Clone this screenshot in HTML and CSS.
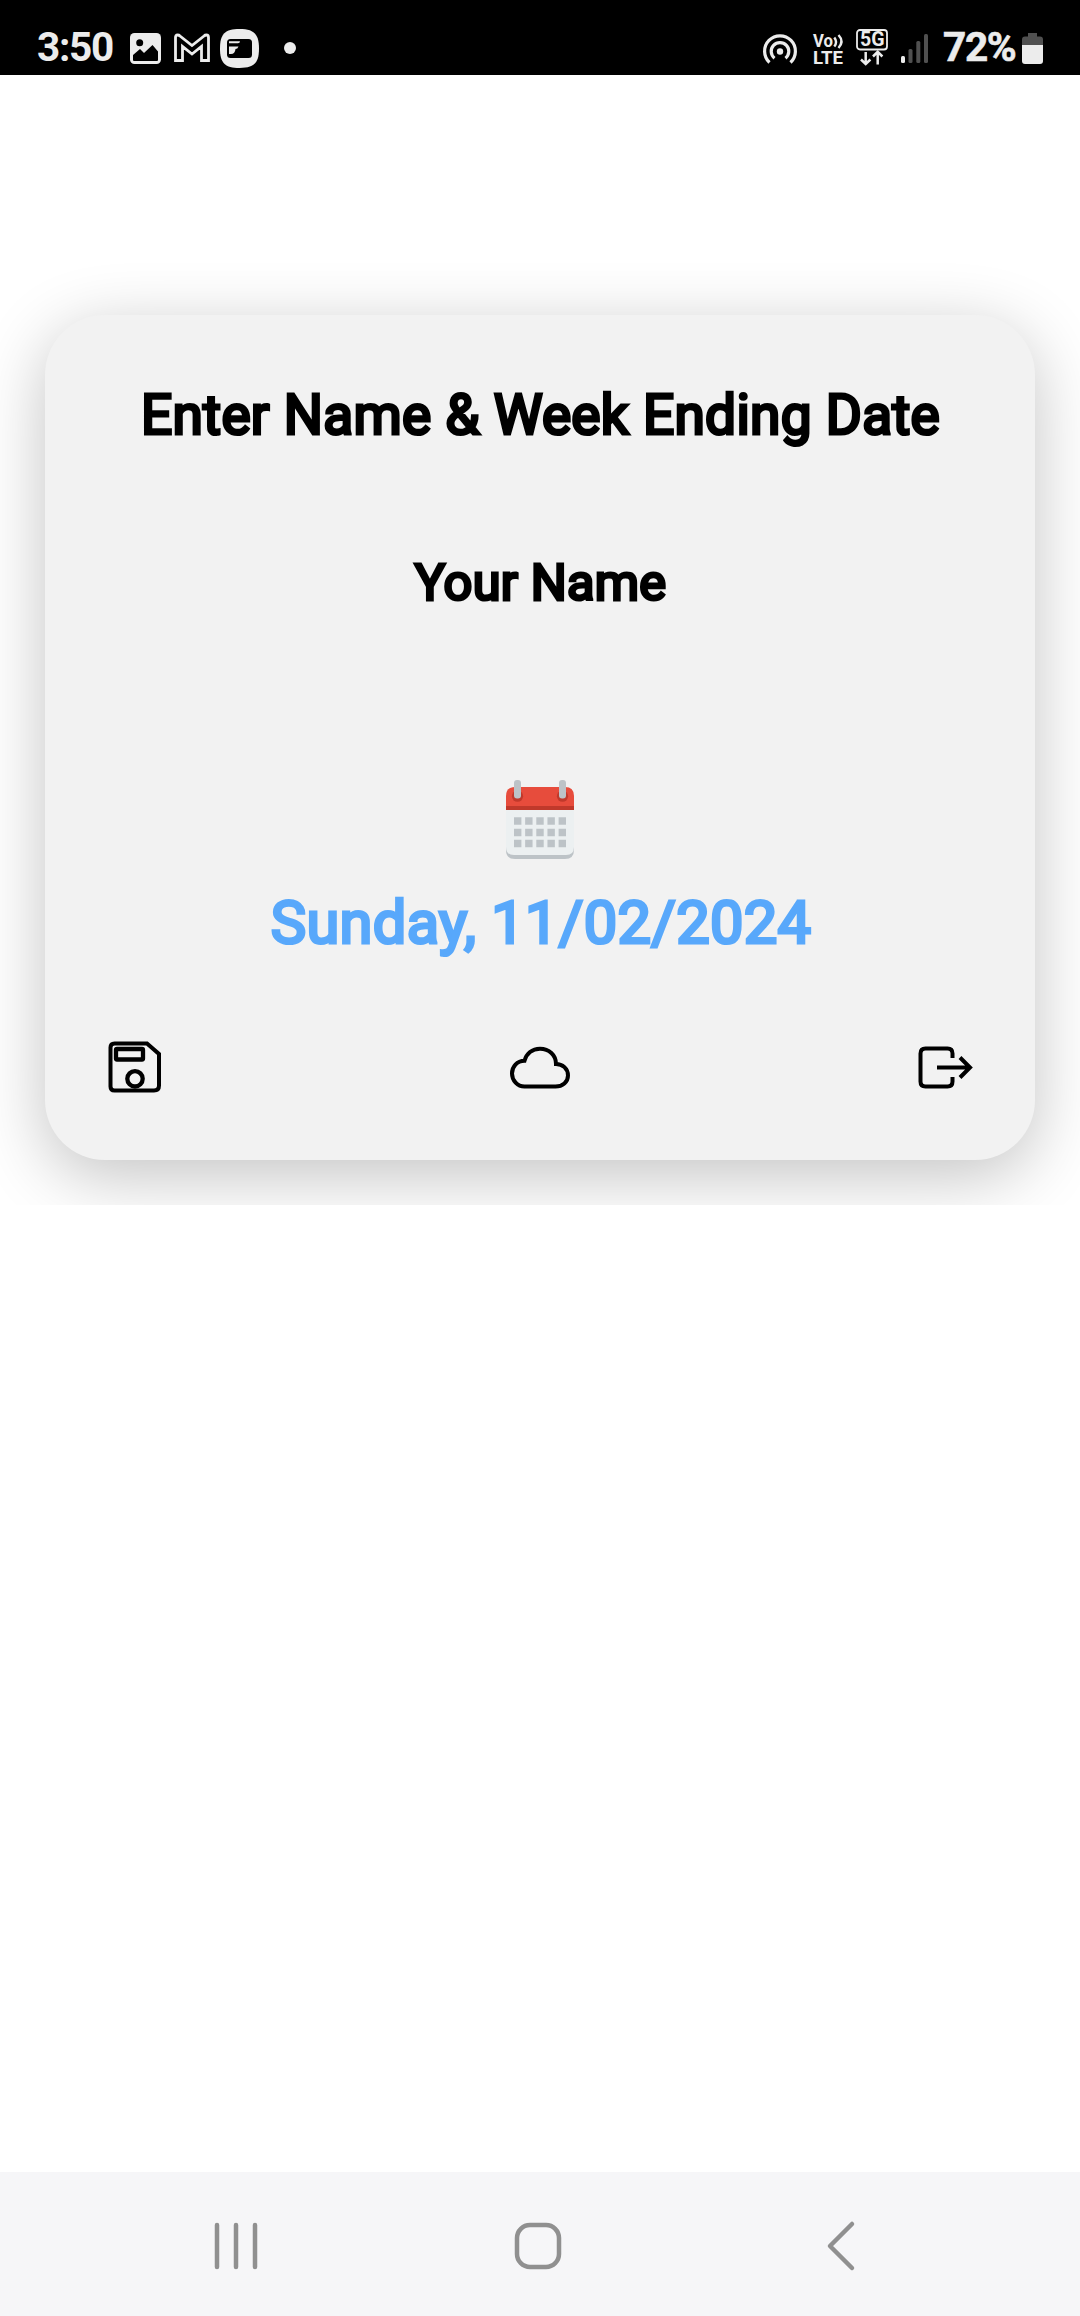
FILE: index.html
```html
<!DOCTYPE html>
<html lang="en">
<head>
<meta charset="utf-8">
<title>Week Ending Date</title>
<link rel="stylesheet" href="styles.css">
</head>
<body>
<header class="status">
  <span class="clock">3:50</span>
  <svg class="photo" width="31" height="31" viewBox="0 0 31 31"><rect width="31" height="31" rx="4.500" fill="#ececec"/><circle cx="9.700" cy="9.700" r="3.500"/><path d="M3 22l7-6 4 4 8.500-8L28 18.500V27q0 1-1 1H4q-1 0-1-1z"/></svg>
  <svg class="mail" width="36" height="28" viewBox="0 0 36 28"><path d="M1.500 26.500V3.500Q1.500 1 3.500 1 5 1 6 2l12 9.500L30 2q1-1 2.500-1 2 0 2 2.500v23h-7V12.500L18 20 8.500 12.500v14z" fill="#000" stroke="#ececec" stroke-width="2.800"/></svg>
  <svg class="app" width="39" height="39" viewBox="0 0 39 39"><path d="M19.500 0C34 0 39 5 39 19.500S34 39 19.500 39 0 34 0 19.500 5 0 19.500 0z" fill="#ececec"/><rect x="7" y="10" width="25" height="19" rx="3.500" fill="#000"/><path d="M9 12.200h11q0 2-2 2H9zM9 17.500h9.500q-1 2.500-3 2.500-.5 5-4.500 5H9z" fill="#ececec"/></svg>
  <i class="more"></i>
  <svg class="hotspot" width="34" height="30" viewBox="0 0 34 30"><g fill="none" stroke="#ececec" stroke-width="3.200"><path d="M6.500 28.500a15.400 15.400 0 1 1 21 0"/><path d="M11.500 24.200a8.800 8.800 0 1 1 11 0"/></g><circle cx="17" cy="17.500" r="3.200" fill="#ececec"/></svg>
  <svg class="volte" width="31" height="31" viewBox="0 0 31 31"><text x="0" y="13" textLength="20" lengthAdjust="spacingAndGlyphs">Vo</text><text x="0" y="30" textLength="30" lengthAdjust="spacingAndGlyphs">LTE</text><path d="M21.300 3.500q3.500 4.500 0 9M25.500 1q6 6.500 0 13" fill="none" stroke="#ececec" stroke-width="2.400"/></svg>
  <svg class="network" width="32" height="37" viewBox="0 0 32 37"><rect x="1" y="1" width="30" height="19.500" rx="3" fill="none" stroke="#ececec" stroke-width="1.800"/><text x="4" y="17.300" textLength="24.500" lengthAdjust="spacingAndGlyphs">5G</text><path d="M9.700 23v12M5 30.500l4.700 4.500 4.700-4.500M21.700 35.500V23M17 27.500l4.700-4.700 4.700 4.700" fill="none" stroke="#ececec" stroke-width="2.500"/></svg>
  <svg class="signal" width="28" height="30" viewBox="0 0 28 30"><g fill="#505050"><rect x="7.500" y="15" width="4" height="14" rx="1.500"/><rect x="15.300" y="7" width="4" height="22" rx="1.500"/><rect x="23" y="0" width="4" height="29" rx="1.500"/></g><rect x="0" y="22" width="4" height="7" rx="1.500" fill="#ececec"/></svg>
  <span class="percent">72%</span>
  <svg class="battery" width="21" height="31" viewBox="0 0 21 31"><path d="M6 0h9v3.500h3q3 0 3 3V12H0V6.500q0-3 3-3h3z" fill="#505050"/><path d="M0 12h21v16q0 3-3 3H3q-3 0-3-3z" fill="#ececec"/></svg>
</header>

<main class="content">
  <section class="card">
    <h1 class="title">Enter Name &amp; Week Ending Date</h1>
    <div class="name">Your Name</div>
    <svg class="calendar" width="68" height="80" viewBox="0 0 68 80">
      <path d="M0 65v5q0 9 9 9h50q9 0 9-9v-5z" fill="#bdc3c7"/><path d="M0 28h68v39q0 8-8 8H8q-8 0-8-8z" fill="#ecf0f1"/><path d="M0 16q0-9 9-9h50q9 0 9 9v11H0z" fill="#e74c3c"/><path d="M0 26h68v4H0z" fill="#c0392b"/>
      <circle cx="11.500" cy="16.200" r="5.600" fill="#c0392b"/><circle cx="56.500" cy="16.200" r="5.600" fill="#c0392b"/><rect x="8" y="0" width="7" height="18.500" rx="3" fill="#bdc3c7"/><rect x="53" y="0" width="7" height="18.500" rx="3" fill="#bdc3c7"/>
      <path d="M8 41h52M8 52.500h52M8 63.500h52" stroke="#bdc3c7" stroke-width="7.500" stroke-dasharray="7.400 3.750"/>
    </svg>
    <div class="date">Sunday, 11/02/2024</div>
    <div class="actions">
      <svg width="60" height="60" viewBox="0 0 60 60"><g class="line"><path d="M9.500 6.500h32.500L54 17v31.500q0 5-5 5H9.500q-4 0-4-4v-39q0-4 4-4z"/><rect class="heavy" x="11" y="12" width="27" height="10.500" rx="1"/><circle class="heavy" cx="30" cy="41.800" r="7.700"/></g></svg>
      <svg width="64" height="60" viewBox="0 0 64 60"><path class="line" d="M16.500 49.500h31c7 0 12.500-4.500 12.500-11 0-7-5.500-11.500-12-11.500C48 18 41 11.800 32 11.800c-8 0-13.500 5-15.500 12C9 24 4 29.500 4 36.500c0 7 5.500 13 12.500 13z"/></svg>
      <svg width="60" height="60" viewBox="0 0 60 60"><path class="line" d="M37.500 21v-4.500q0-5-5-5H10.500q-5 0-5 5v28q0 5 5 5h22q5 0 5-5V40M22 30.500h32M45 20.500l10 10-10 10"/></svg>
    </div>
  </section>
</main>

<footer class="nav">
  <svg width="48" height="50" viewBox="0 0 48 50"><path d="M5 4v42M24 4v42M43 4v42"/></svg>
  <svg class="home" width="52" height="52" viewBox="0 0 52 52"><rect x="5" y="5" width="42" height="42" rx="13"/></svg>
  <svg width="30" height="52" viewBox="0 0 30 52"><path d="M27 4L5 26l22 22"/></svg>
</footer>
</body>
</html>
```
FILE: styles.css
```css
body {
  margin: 0;
  height: 2316px;
  display: flex;
  flex-direction: column;
  background: #fff;
  font-family: Roboto, "Liberation Sans", sans-serif;
  overflow: hidden;
}
svg { display: block; flex: none; overflow: visible; }

.status {
  height: 75px;
  box-sizing: border-box;
  padding: 0 37px;
  display: flex;
  align-items: flex-start;
  background: #000;
  color: #ececec;
}
.status text { fill: #ececec; font-weight: 700; font-size: 18px; }
.status .network text { font-size: 20px; }
.clock, .percent {
  font-size: 40.500px;
  line-height: 48px;
  font-weight: 700;
  margin-top: 23px;
  white-space: nowrap;
}
.clock { width: 93px; letter-spacing: -1.300px; }
.percent { -webkit-text-stroke: 0.600px currentColor; }
.photo { margin-top: 33px; }
.mail { margin: 34px 0 0 13px; }
.app { margin: 29px 0 0 10px; }
.more { width: 12px; height: 12px; border-radius: 50%; background: #ececec; margin: 42px 0 0 25px; }
.hotspot { margin: 34px 0 0 auto; }
.volte { margin: 34px 0 0 16px; }
.network { margin: 29px 0 0 12px; }
.signal { margin: 34px 0 0 13px; }
.percent { width: 79px; margin-left: 14px; letter-spacing: -1.300px; }
.battery { margin-top: 33px; }

.content {
  height: 1130px;
  box-sizing: border-box;
  padding: 240px 45px 45px;
  overflow: hidden;
  background: #fff;
}
.card {
  height: 845px;
  box-sizing: border-box;
  padding: 67px 60px 0;
  border-radius: 60px;
  background: #f2f2f2;
  box-shadow: 0 16px 68px rgba(0, 0, 0, 0.240);
  display: flex;
  flex-direction: column;
  align-items: center;
}
.title, .name, .date {
  margin: 0;
  font-weight: 400;
  color: #000;
  -webkit-text-stroke: 3.100px currentColor;
  white-space: nowrap;
}
.title { font-size: 55px; line-height: 66px; letter-spacing: 0.280px; padding-left: 1px; }
.name { font-size: 50.500px; line-height: 60px; margin-top: 105px; padding-left: 1px; letter-spacing: 0.240px; }
.calendar { margin-top: 167px; }
.date { font-size: 59.500px; line-height: 70px; margin-top: 28px; padding-left: 2px; letter-spacing: 0.320px; color: #58a8fb; }
.actions {
  align-self: stretch;
  margin-top: 79px;
  display: flex;
  justify-content: space-between;
}
.line { fill: none; stroke: #000; stroke-width: 4px; }
.heavy { stroke-width: 4.300px; }

.nav {
  height: 144px;
  box-sizing: border-box;
  margin-top: auto;
  padding: 4px 225px 0 212px;
  display: flex;
  align-items: center;
  justify-content: space-between;
  background: #f6f6f8;
}
.nav .home { margin-right: 9px; }
.nav svg { fill: none; stroke: #909090; stroke-width: 4.500px; stroke-linecap: round; stroke-linejoin: round; }
```
